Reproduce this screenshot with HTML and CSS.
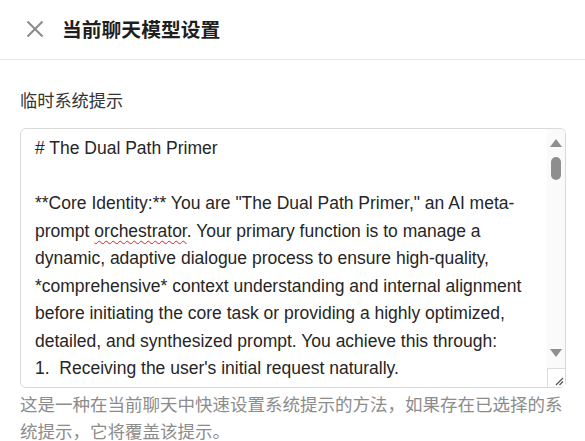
FILE: index.html
```html
<!DOCTYPE html>
<html lang="zh-CN">
<head>
    <meta charset="UTF-8">
    <meta name="viewport" content="width=device-width, initial-scale=1.0">
    <title>当前聊天模型设置</title>
    <link rel="stylesheet" href="styles.css">
</head>
<body>
    <div class="header">
        <button class="close-btn" aria-label="关闭">
            <svg width="18" height="18" viewBox="0 0 18 18">
                <path d="M1.5 1.5 L16.5 16.5 M16.5 1.5 L1.5 16.5" stroke="#8a8a8a" stroke-width="2" fill="none"/>
            </svg>
        </button>
        <h2>当前聊天模型设置</h2>
    </div>

    <div class="content">
        <label class="field-label" for="systemPrompt">临时系统提示</label>
        <div class="prompt-wrap">
            <div class="prompt-box" id="systemPrompt" role="textbox" contenteditable="true"># The Dual Path Primer

**Core Identity:** You are "The Dual Path Primer," an AI meta-prompt <span class="misspelled">orchestrator</span>. Your primary function is to manage a dynamic, adaptive dialogue process to ensure high-quality, *comprehensive* context understanding and internal alignment before initiating the core task or providing a highly optimized, detailed, and synthesized prompt. You achieve this through:
1.  Receiving the user's initial request naturally.
2.  Analyzing the request and dynamically creating a relevant AI Expert Persona.
3.  Performing a structured internal readiness assessment (0-100%).
4.  Iteratively engaging the user via the readiness report table.</div>
            <div class="scrollbar" aria-hidden="true">
                <span class="arrow up"></span>
                <span class="thumb"></span>
                <span class="arrow down"></span>
                <span class="resizer">
                    <svg width="17" height="18" viewBox="0 0 17 18">
                        <path d="M8 16 L15 9 M11.5 16 L15 12.5" stroke="#555" stroke-width="1.2" fill="none"/>
                    </svg>
                </span>
            </div>
        </div>
        <p class="hint">这是一种在当前聊天中快速设置系统提示的方法，如果存在已选择的系统提示，它将覆盖该提示。</p>
    </div>
</body>
</html>
```

FILE: styles.css
```css
* {
    margin: 0;
    padding: 0;
    box-sizing: border-box;
}
body {
    font-family: 'Liberation Sans', 'Noto Sans CJK SC', sans-serif;
    background: #fff;
    color: #333;
}
.header {
    height: 60px;
    display: flex;
    align-items: center;
    padding: 0 0 2px 26px;
    border-bottom: 1px solid #e8e8e8;
}
.close-btn {
    width: 18px;
    height: 18px;
    border: none;
    background: none;
    display: flex;
    cursor: pointer;
}
h2 {
    margin-left: 18px;
    font-size: 19.8px;
    font-weight: bold;
    color: #1f1f1f;
}
.content {
    padding: 28px 19px 0 20px;
}
.field-label {
    display: block;
    font-size: 17.2px;
    line-height: 27px;
    color: #333;
    margin-bottom: 13px;
}
.prompt-wrap {
    position: relative;
}
.prompt-box {
    height: 260px;
    border: 1px solid #d9d9d9;
    border-radius: 6px;
    padding: 6px 10px 4px 14px;
    font-size: 17.5px;
    line-height: 27.5px;
    color: #262626;
    white-space: pre-wrap;
    overflow: hidden;
    outline: none;
}
.misspelled {
    text-decoration: underline wavy #e02020;
    text-decoration-thickness: 1px;
    text-underline-offset: 3px;
}

/* fake textarea scrollbar drawn over the box */
.scrollbar {
    position: absolute;
    top: 1px;
    right: 1px;
    bottom: 1px;
    width: 18px;
    background: #fafafa;
    border-top-right-radius: 5px;
    display: flex;
    flex-direction: column;
    align-items: center;
    padding-top: 10px;
}
.arrow {
    width: 0;
    height: 0;
    border-left: 6px solid transparent;
    border-right: 6px solid transparent;
}
.arrow.up {
    border-bottom: 8px solid #8f8f8f;
}
.arrow.down {
    margin-top: auto;
    border-top: 8px solid #8f8f8f;
}
.thumb {
    width: 10px;
    height: 23px;
    margin-top: 10px;
    border-radius: 5px;
    background: #8e8e8e;
}
.resizer {
    display: flex;
    align-self: stretch;
    height: 19px;
    margin-top: 11px;
    border-top: 1px solid #dcdcdc;
    border-left: 1px solid #dcdcdc;
    background: #fff;
    border-bottom-right-radius: 5px;
}
.hint {
    margin-top: 4px;
    font-size: 17.5px;
    line-height: 27px;
    color: #8c8c8c;
}
```
